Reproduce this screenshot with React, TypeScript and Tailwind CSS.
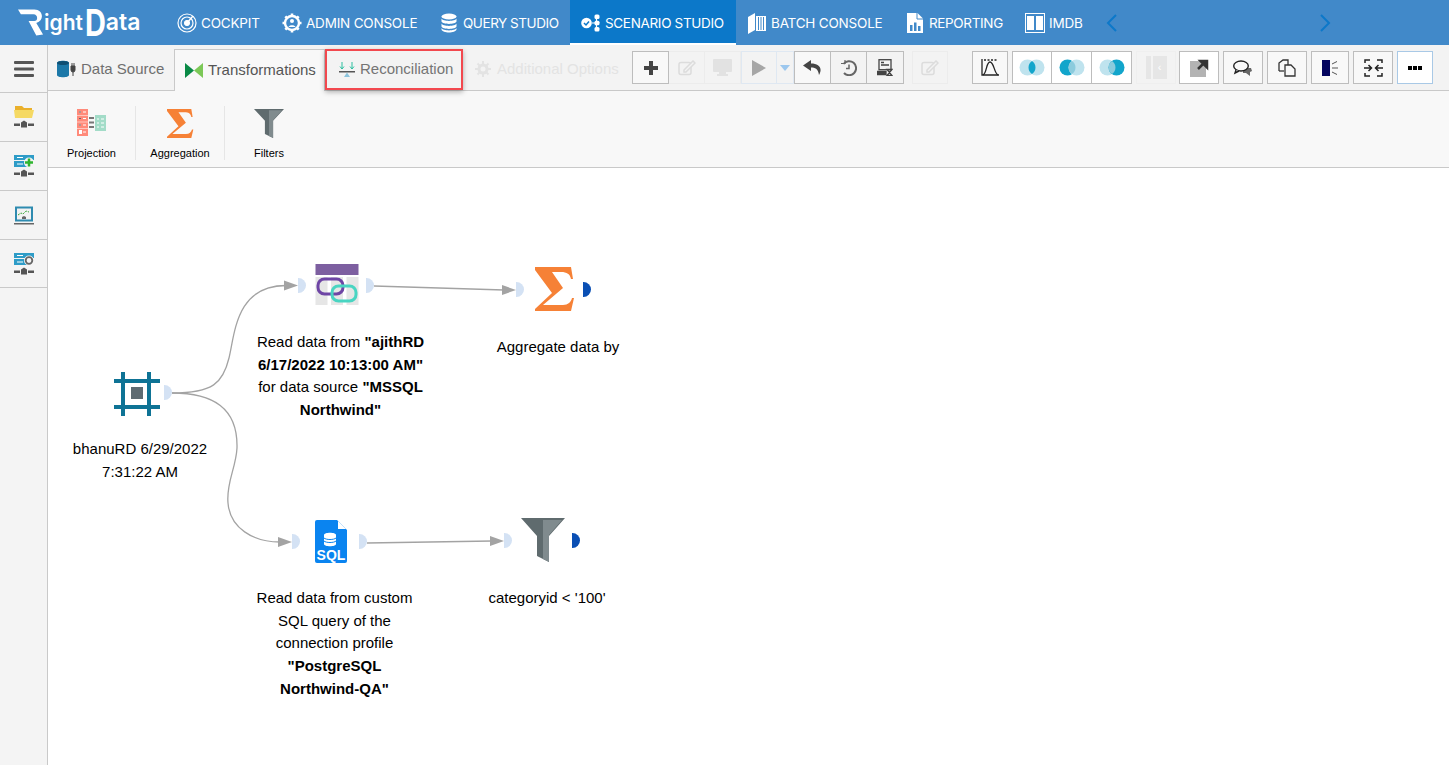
import type { ReactNode } from "react";

const NAV = [
  { label: "COCKPIT", w: 105, pl: "pl-[2px] gap-[4px]", tk: "tracking-[-0.2px]", icon: "cockpit" },
  { label: "ADMIN CONSOLE", w: 159, pl: "pl-[2px] gap-[4px]", tk: "tracking-[-0.2px]", icon: "admin" },
  { label: "QUERY STUDIO", w: 131, pl: "pl-[2px] gap-[6px]", tk: "tracking-[-0.45px]", icon: "query" },
  { label: "SCENARIO STUDIO", w: 166, pl: "pl-[11px] gap-[4px]", tk: "tracking-[-0.33px]", icon: "scenario", active: true },
  { label: "BATCH CONSOLE", w: 159, pl: "pl-[12px] gap-[5px]", tk: "tracking-[-0.2px]", icon: "batch" },
  { label: "REPORTING", w: 118, pl: "pl-[12px] gap-[6px]", tk: "tracking-[-0.35px]", icon: "report" },
  { label: "IMDB", w: 80, pl: "pl-[12px] gap-[4px]", tk: "tracking-[-0.2px]", icon: "imdb" },
];

function NavIcon({ name }: { name: string }) {
  if (name === "cockpit")
    return (
      <svg width="20" height="20" viewBox="0 0 20 20" fill="none" stroke="#fff">
        <circle cx="10" cy="10" r="9" strokeWidth="1.2" />
        <circle cx="10" cy="10" r="6" strokeWidth="1.2" />
        <circle cx="10" cy="10" r="2.6" fill="#fff" />
        <path d="M10 10 L16 3" strokeWidth="1.4" />
      </svg>
    );
  if (name === "admin")
    return (
      <svg width="20" height="20" viewBox="0 0 20 20" fill="none" stroke="#fff">
        <circle cx="10" cy="10" r="7" strokeWidth="2.4" />
        <path d="M10 0.5v3M10 16.5v3M0.5 10h3M16.5 10h3M3.3 3.3l2.1 2.1M14.6 14.6l2.1 2.1M3.3 16.7l2.1-2.1M14.6 5.4l2.1-2.1" strokeWidth="2.6" />
        <circle cx="10" cy="8" r="2" fill="#fff" stroke="none" />
        <path d="M6.5 14c.6-2.4 6.400-2.400 7 0z" fill="#fff" stroke="none" />
      </svg>
    );
  if (name === "query")
    return (
      <svg width="16" height="20" viewBox="0 0 16 20" fill="#fff">
        <ellipse cx="8" cy="3.500" rx="7.500" ry="3" />
        <path d="M.5 5.500c1 3.200 14 3.200 15 0v3c-1 3.200-14 3.200-15 0z" />
        <path d="M.5 10.500c1 3.200 14 3.200 15 0v3c-1 3.200-14 3.200-15 0z" />
        <path d="M.5 15c1 3.200 14 3.200 15 0v1.500c-1 4-14 4-15 0z" />
      </svg>
    );
  if (name === "scenario")
    return (
      <svg width="20" height="20" viewBox="0 0 20 20">
        <circle cx="5.500" cy="10" r="5.300" fill="#fff" />
        <path d="M3 10l2 2 3-3.500" fill="none" stroke="#0c78c9" strokeWidth="1.500" />
        <path d="M11 10h4M15.500 4v12" stroke="#fff" strokeWidth="1.200" />
        <rect x="13.500" y="1.500" width="5" height="4.500" rx="1.500" fill="#fff" />
        <rect x="13.500" y="7.800" width="5" height="4.500" rx="1.500" fill="#fff" />
        <rect x="13.500" y="14" width="5" height="4.500" rx="1.500" fill="#fff" />
      </svg>
    );
  if (name === "batch")
    return (
      <svg width="18" height="21" viewBox="0 0 18 21" fill="#fff">
        <path d="M0 4l7-4v17l-7 4z" />
        <path d="M8 3h10v15H8z" />
        <path d="M10.500 4v13M13 4v13M15.500 4v13" stroke="#4189c9" strokeWidth="1" />
      </svg>
    );
  if (name === "report")
    return (
      <svg width="16" height="20" viewBox="0 0 16 20">
        <path d="M0 0h10.500L16 5.500V20H0z" fill="#fff" />
        <path d="M10 0v6h6" fill="none" stroke="#4189c9" />
        <path d="M3 12h2.500v6H3zM7 9.500h2.500V18H7zM11 13h2.500v5H11z" fill="#4189c9" />
      </svg>
    );
  return (
    <span className="flex h-[20px] w-[20px] items-center justify-center gap-[2px] border border-white">
      <span className="h-[14px] w-[7px] bg-white" />
      <span className="h-[14px] w-[7px] bg-white" />
    </span>
  );
}

function Logo() {
  return (
    <div className="ml-[18px] flex w-[141px] items-center text-white [font-family:Inter,sans-serif]">
      <svg width="26" height="27" viewBox="0 0 27 27" fill="#fff">
        <path d="M0 0h17c9 0 11 11 2 14l7 12-7 1-8-15h6c4 0 4-7-1-7H3z" />
      </svg>
      <span className="text-[21px] leading-none font-semibold">ight</span>
      <span className="ml-[2px] inline-block scale-y-[1.25] text-[29px] leading-none font-bold">D</span>
      <span className="text-[23px] leading-none font-semibold">ata</span>
    </div>
  );
}

function TopBar() {
  return (
    <div className="flex h-[45px] shrink-0 items-center bg-[#4189c9]">
      <Logo />
      <div className="ml-[16px] flex h-full">
        {NAV.map((n) => (
          <div
            key={n.label}
            style={{ width: n.w }}
            className={`flex h-full items-center pt-[1px] text-white ${n.pl} ${n.active ? "bg-[#0c78c9] shadow-[inset_0_-2px_0_#fff]" : ""}`}
          >
            <NavIcon name={n.icon} />
            <span className={`text-[13.5px] whitespace-nowrap [font-family:Inter,sans-serif] ${n.tk}`}>{n.label}</span>
          </div>
        ))}
      </div>
      <svg width="14" height="20" viewBox="0 0 14 20" fill="none" stroke="#0c78c9" strokeWidth="2" className="ml-[12px]">
        <path d="M11 2L3 10l8 8" />
      </svg>
      <svg width="14" height="20" viewBox="0 0 14 20" fill="none" stroke="#0c78c9" strokeWidth="2" className="ml-[199px]">
        <path d="M3 2l8 8-8 8" />
      </svg>
    </div>
  );
}

function SideItem({ children, h }: { children: ReactNode; h: string }) {
  return <div className={`flex items-center justify-center border-b border-[#c9c9c9] ${h}`}>{children}</div>;
}

function NetBase({ y }: { y: number }) {
  return (
    <g fill="#555">
      <rect x="0" y={y + 3} width="6" height="2.500" />
      <rect x="14" y={y + 3} width="6" height="2.500" />
      <path d={`M7 ${y + 7}v-5l3-2 3 2v5z`} />
    </g>
  );
}

function Sidebar() {
  return (
    <div className="flex w-[48px] shrink-0 flex-col border-r border-[#c9c9c9] bg-[#f4f4f4]">
      <SideItem h="h-[48px]">
        <svg width="20" height="16" viewBox="0 0 20 16" fill="#555">
          <rect width="20" height="3" rx="1" />
          <rect y="6.500" width="20" height="3" rx="1" />
          <rect y="13" width="20" height="3" rx="1" />
        </svg>
      </SideItem>
      <SideItem h="h-[49px]">
        <svg width="20" height="22" viewBox="0 0 20 22">
          <path d="M1 0h7l2 2h8v6H1z" fill="#eab02b" />
          <path d="M1 12L0 4h20l-2 8z" fill="#f5d963" />
          <NetBase y={14.500} />
        </svg>
      </SideItem>
      <SideItem h="h-[49px]">
        <svg width="20" height="22" viewBox="0 0 20 22">
          <rect x="0" y="0" width="20" height="5" fill="#2e9cc7" />
          <rect x="0" y="6" width="14" height="6" fill="#2e9cc7" />
          <path d="M3 2.500h6M3 9h6" stroke="#fff" />
          <circle cx="15" cy="7.500" r="5" fill="#f4f4f4" />
          <path d="M15 3.500v8M11 7.500h8" stroke="#2fb52f" strokeWidth="2.500" />
          <NetBase y={14.500} />
        </svg>
      </SideItem>
      <SideItem h="h-[49px]">
        <svg width="20" height="19" viewBox="0 0 20 19">
          <rect x="1" y="0.500" width="18" height="15" fill="#2e8bb0" />
          <rect x="3" y="2.500" width="14" height="11" fill="#f2f2f2" />
          <path d="M4 9l3-2 2 1 3-3 3 1" fill="none" stroke="#35a535" strokeDasharray="2 1" />
          <path d="M8 13v-2l2-1 2 1v2z" fill="#666" />
          <rect y="17" width="20" height="1.500" fill="#666" />
        </svg>
      </SideItem>
      <SideItem h="h-[48px]">
        <svg width="20" height="22" viewBox="0 0 20 22">
          <rect x="0" y="0" width="20" height="5" fill="#2e9cc7" />
          <rect x="0" y="6" width="14" height="6" fill="#2e9cc7" />
          <path d="M3 2.500h6M3 9h6" stroke="#fff" />
          <circle cx="15" cy="7.500" r="5" fill="#f4f4f4" />
          <circle cx="15" cy="7.500" r="3.300" fill="none" stroke="#666" strokeWidth="1.800" />
          <NetBase y={14.500} />
        </svg>
      </SideItem>
    </div>
  );
}

function Btn({ children, w, cls = "border-[#bdbdbd] bg-white" }: { children?: ReactNode; w: number; cls?: string }) {
  return (
    <div style={{ width: w }} className={`flex h-[33px] items-center justify-center border ${cls}`}>
      {children}
    </div>
  );
}

function EditIcon() {
  return (
    <svg width="18" height="16" viewBox="0 0 18 16" fill="none" stroke="#dcdcdc" strokeWidth="1.500">
      <rect x="1" y="2.500" width="12" height="12" rx="2" />
      <path d="M6 10l9-9 2 2-9 9H6z" fill="#f3f3f3" />
    </svg>
  );
}

function Venn({ mode }: { mode: number }) {
  const light = "#bfe3ee";
  const dark = "#12a5cb";
  return (
    <svg width="26" height="17" viewBox="0 0 26 17">
      <circle cx="8.500" cy="8.500" r="8" fill={mode === 1 ? dark : light} />
      <circle cx="17.500" cy="8.500" r="8" fill={mode === 2 ? dark : light} />
      <path d="M13 1.900a8 8 0 0 1 0 13.200a8 8 0 0 1 0-13.200z" fill={mode === 0 ? dark : "#8bcbdd"} />
    </svg>
  );
}

function Toolbar() {
  return (
    <div className="flex items-center">
      <Btn w={37} cls="border-[#bdbdbd] bg-[#f8f8f8]">
        <svg width="14" height="14" viewBox="0 0 14 14" fill="#444">
          <path d="M5 0h4v5h5v4H9v5H5V9H0V5h5z" />
        </svg>
      </Btn>
      <Btn w={36} cls="border-[#ececec] border-l-0 bg-[#f3f3f3]"><EditIcon /></Btn>
      <Btn w={36} cls="border-[#ececec] border-l-0 bg-[#f3f3f3]">
        <svg width="19" height="17" viewBox="0 0 19 17" fill="#e2e2e2">
          <rect width="19" height="13" rx="1" />
          <rect x="6" y="13" width="7" height="2" />
          <rect x="4" y="15" width="11" height="2" />
        </svg>
      </Btn>
      <Btn w={36} cls="border-[#dfe8f2] bg-[#f3f3f3]">
        <svg width="14" height="16" viewBox="0 0 14 16" fill="#a6a6a6">
          <path d="M0 0l14 8-14 8z" />
        </svg>
      </Btn>
      <Btn w={17} cls="border-[#dfe8f2] border-l-0 bg-[#f3f3f3]">
        <svg width="10" height="6" viewBox="0 0 10 6" fill="#9cc7ee">
          <path d="M0 0h10L5 6z" />
        </svg>
      </Btn>
      <Btn w={37} cls="border-[#bdbdbd] bg-[#f8f8f8]">
        <svg width="19" height="15" viewBox="0 0 19 15" fill="#444">
          <path d="M8 0L0 5.500 8 11V7.500c4 0 7 1 8 7.500 4-7 0-11.500-8-11.500z" />
        </svg>
      </Btn>
      <Btn w={36} cls="border-[#bdbdbd] border-l-0 bg-[#f3f3f3]">
        <svg width="16" height="16" viewBox="0 0 16 16" fill="none" stroke="#666" strokeWidth="2">
          <path d="M2.500 4A7 7 0 1 1 3 13" />
          <path d="M8 4.500V8.500H5" strokeWidth="1.500" />
          <path d="M0 3.500h4V0" strokeWidth="1.200" />
        </svg>
      </Btn>
      <Btn w={37} cls="border-[#bdbdbd] border-l-0 bg-[#f3f3f3]">
        <svg width="16" height="17" viewBox="0 0 16 17" fill="none" stroke="#444" strokeWidth="1.300">
          <rect x="2" y="0.700" width="12" height="10" />
          <path d="M4 3.500h3M4 6h8" />
          <path d="M0 12.500h9v3H0z" fill="#444" />
          <path d="M10 10.500h5l-5 6h5z" />
        </svg>
      </Btn>
      <Btn w={36} cls="ml-[8px] border-[#ececec] bg-[#f3f3f3]"><EditIcon /></Btn>
    </div>
  );
}

function RightTools() {
  return (
    <div className="ml-[24px] flex items-center">
      <Btn w={36} cls="border-[#bdbdbd] bg-[#f8f8f8]">
        <svg width="18" height="17" viewBox="0 0 18 17" fill="none" stroke="#222" strokeWidth="1.300">
          <path d="M1 0v16h17" />
          <path d="M2 16C6 14 5 3 9 3s4 11 8 13" />
          <path d="M3 1h13" strokeDasharray="2 1.500" />
        </svg>
      </Btn>
      <div className="ml-[4px] flex">
        <Btn w={40} cls="border-[#bdbdbd] bg-white"><Venn mode={0} /></Btn>
        <Btn w={40} cls="border-[#bdbdbd] border-l-0 bg-white"><Venn mode={1} /></Btn>
        <Btn w={40} cls="border-[#bdbdbd] border-l-0 bg-white"><Venn mode={2} /></Btn>
      </div>
      <Btn w={40} cls="ml-[4px] border-[#efefef] bg-[#f3f3f3]">
        <span className="flex items-center gap-[2px]">
          <span className="h-[23px] w-[5px] bg-[#e6e6e6]" />
          <span className="flex h-[23px] w-[14px] items-center justify-center bg-[#e6e6e6] text-[11px] leading-none text-white [font-family:'Liberation_Sans',sans-serif]">‹</span>
        </span>
      </Btn>
      <Btn w={40} cls="ml-[3px] border-[#bdbdbd] bg-white">
        <svg width="19" height="19" viewBox="0 0 19 19">
          <rect y="3" width="16" height="16" fill="#b3b3b3" />
          <path d="M8 11l6-6M10.500 3H17v6.500z" stroke="#333" strokeWidth="2.500" fill="#333" />
        </svg>
      </Btn>
      <Btn w={40} cls="ml-[4px] border-[#bdbdbd] bg-[#f8f8f8]">
        <svg width="20" height="16" viewBox="0 0 20 16" fill="none" strokeWidth="1.400">
          <path d="M10 8h8l1 3-2 1v4l-4-3h-3z" fill="#666" />
          <ellipse cx="8" cy="6" rx="7.300" ry="5" stroke="#222" fill="#f8f8f8" />
          <path d="M3 10l-1 3 4-2" stroke="#222" fill="#f8f8f8" />
        </svg>
      </Btn>
      <Btn w={40} cls="ml-[4px] border-[#bdbdbd] bg-[#f8f8f8]">
        <svg width="18" height="18" viewBox="0 0 18 18" fill="none" stroke="#333" strokeWidth="1.300">
          <path d="M1 12V4l4-3h5v5" />
          <path d="M1 12h5" />
          <path d="M7 6h6l4 4v7H7z" fill="#f8f8f8" />
        </svg>
      </Btn>
      <Btn w={38} cls="ml-[4px] border-[#bdbdbd] bg-[#f8f8f8]">
        <svg width="16" height="16" viewBox="0 0 16 16">
          <rect width="8" height="16" fill="#03045e" />
          <path d="M10 4l5-2.500M10 8h6M10 12l5 2.500" stroke="#555" />
        </svg>
      </Btn>
      <Btn w={40} cls="ml-[4px] border-[#bdbdbd] bg-[#f8f8f8]">
        <svg width="19" height="18" viewBox="0 0 19 18" fill="none" stroke="#222" strokeWidth="1.500">
          <path d="M1 4V1h5M13 1h5v3M1 14v3h5M13 17h5v-3" />
          <path d="M0 9h7M4.500 6L7.500 9l-3 3M19 9h-7M14.500 6l-3 3 3 3" />
        </svg>
      </Btn>
      <Btn w={36} cls="ml-[4px] border-[#a9c9e6] bg-white">
        <span className="flex gap-[1px]">
          <span className="h-[4px] w-[4px] bg-black" />
          <span className="h-[4px] w-[4px] bg-black" />
          <span className="h-[4px] w-[4px] bg-black" />
        </span>
      </Btn>
    </div>
  );
}

function Tabs() {
  return (
    <div className="flex h-[46px] shrink-0 items-end border-b border-[#c9c9c9] bg-[#f3f3f3]">
      <div className="relative z-10 flex h-full w-[126px] items-center pt-[3px] pl-[9px] text-[15px] text-[#6f6f6f]">
        <svg width="20" height="18" viewBox="0 0 20 18" className="mr-[4px]">
          <path d="M0 3c0-3 12-3 12 0v12c0 3-12 3-12 0z" fill="#1c78a8" />
          <ellipse cx="6" cy="3" rx="6" ry="2" fill="#0f4f73" />
          <path d="M14 6v4a2 2 0 0 0 4 0V6zM15 3v3M17 3v3M16 12v4" stroke="#444" fill="#444" />
        </svg>
        Data Source
      </div>
      <div className="relative z-10 -mb-[1px] flex h-[42px] w-[151px] items-center border-x border-t border-[#c9c9c9] bg-[#f8f8f8] pl-[10px] text-[15px] text-[#555]">
        <svg width="18" height="15" viewBox="0 0 18 15" className="mr-[5px]">
          <path d="M0 0l9 7.500L0 15z" fill="#0a8a46" />
          <path d="M18 0L9 7.500 18 15z" fill="#7cc857" />
        </svg>
        Transformations
      </div>
      <div className="relative z-20 flex h-[41px] w-[138px] items-center border-2 border-[#f2484e] pl-[11px] text-[15px] text-[#757575] shadow-[0_2px_5px_rgba(0,0,0,0.3)]">
        <svg width="18" height="16" viewBox="0 0 18 16" className="mr-[4px]">
          <path d="M4 0v7M14 0v7M2 4.500L4 7l2-2.500M12 4.500L14 7l2-2.500" fill="none" stroke="#2cbfa0" />
          <rect x="1" y="9" width="16" height="1.500" fill="#555" />
          <path d="M9 10.500l3 4.500H6z" fill="#8cc4dc" />
        </svg>
        Reconciliation
      </div>
      <div className="flex h-full w-[169px] items-center pt-[3px] pl-[12px] text-[15px] text-[#e3e3e3]">
        <svg width="16" height="16" viewBox="0 0 16 16" className="mr-[6px]" fill="none" stroke="#e3e3e3" strokeWidth="3">
          <circle cx="8" cy="8" r="4" />
          <path d="M8 0v3M8 13v3M0 8h3M13 8h3M2.500 2.500l2 2M11.500 11.500l2 2M2.500 13.500l2-2M11.500 4.500l2-2" strokeWidth="2" />
        </svg>
        Additional Options
      </div>
      <div className="flex h-full items-center">
        <Toolbar />
        <RightTools />
      </div>
    </div>
  );
}

function RibbonItem({ label, w, children, sep = true }: { label: string; w: number; children: ReactNode; sep?: boolean }) {
  return (
    <div style={{ width: w }} className={`flex h-[54px] flex-col items-center justify-between pt-[2px] ${sep ? "border-r border-[#e6e6e6]" : ""}`}>
      <div className="flex h-[30px] items-center">{children}</div>
      <span className="text-[11px] leading-[13px] text-black [font-family:'Liberation_Sans',sans-serif]">{label}</span>
    </div>
  );
}

function ProjectionIcon() {
  return (
    <svg width="30" height="28" viewBox="0 0 30 28">
      <rect x="0" y="0" width="11" height="27" fill="#ff8a7a" />
      <path d="M0 6.500h11M0 13h11M0 19.500h11" stroke="#fff" strokeOpacity="0.5" />
      <path d="M2 3h2M6 3h3M2 9.500h2M6 9.500h3M2 16h2M6 16h3M6 23h3" stroke="#fff" />
      <path d="M2 3h2M2 9.500h2M2 16h2" stroke="#666" />
      <rect x="2" y="21" width="3" height="4" fill="#fff" />
      <rect x="18" y="6" width="11" height="16" fill="#a3dcc8" />
      <path d="M20 10h2M24 10h3M20 14h2M24 14h3M20 18h2M24 18h3" stroke="#fff" />
      <path d="M12 9h5M12 13.500h5M12 18h5" stroke="#777" strokeWidth="1.800" />
    </svg>
  );
}

function SigmaIcon({ w, h }: { w: number; h: number }) {
  return (
    <svg width={w} height={h} viewBox="0 0 40 44" preserveAspectRatio="none">
      <path d="M0 0H36L38 12H36C35 7 32 5 26 5H17L28 21L8 38H28C33 38 36 35 37 31H39L36 44H0V42L17 26L0 3Z" fill="#f68136" />
    </svg>
  );
}

function FunnelIcon({ w, h }: { w: number; h: number }) {
  return (
    <svg width={w} height={h} viewBox="0 0 44 44" preserveAspectRatio="none">
      <path d="M0 0H44L28 18V44L16 38V18Z" fill="#5f6b6e" />
      <path d="M22 2H41L28 17V44L22 41Z" fill="#808b8e" />
    </svg>
  );
}

function Ribbon() {
  return (
    <div className="flex h-[77px] shrink-0 items-start border-b border-[#c9c9c9] bg-[#f8f8f8] pt-[15px]">
      <div className="flex">
        <RibbonItem label="Projection" w={88}><ProjectionIcon /></RibbonItem>
        <RibbonItem label="Aggregation" w={89}><SigmaIcon w={27} h={29} /></RibbonItem>
        <RibbonItem label="Filters" w={88} sep={false}><FunnelIcon w={30} h={29} /></RibbonItem>
      </div>
    </div>
  );
}

function Port({ x, y, out }: { x: number; y: number; out?: boolean }) {
  return (
    <div
      style={{ left: x, top: y }}
      className={`absolute h-[15px] w-[8px] rounded-r-full ${out ? "bg-[#0a4fb4]" : "bg-[#d4e2f4]"}`}
    />
  );
}

function Label({ x, y, w, children }: { x: number; y: number; w: number; children: ReactNode }) {
  return (
    <div
      style={{ left: x, top: y, width: w }}
      className="absolute text-center text-[15px] leading-[22.700px] text-black [font-family:'Liberation_Sans',sans-serif]"
    >
      {children}
    </div>
  );
}

function Canvas() {
  return (
    <div className="relative flex-1 bg-white">
      {/* coordinates are relative to the canvas, origin at 48,168 */}
      <svg width="1401" height="597" className="absolute top-0 left-0" fill="none" stroke="#a3a3a3" strokeWidth="1.300">
        <path d="M124 225 C165 225 175 215 181 190 C187 165 188 117.500 238 117.500" />
        <path d="M124 225 C165 225 190 240 189 280 C188 300 178 315 180 335 C182 360 205 374 232 374" />
        <path d="M326 118 L456 122" />
        <path d="M319 375 L444 373" />
        <g fill="#a3a3a3" stroke="none">
          <path d="M236 112.500l14 5-14 5z" />
          <path d="M230 369l14 5-14 5z" />
          <path d="M454 117l14 5-14 5z" />
          <path d="M442 368l14 5-14 5z" />
        </g>
      </svg>

      {/* root node */}
      <svg width="46" height="44" viewBox="0 0 46 44" className="absolute top-[204px] left-[66px]">
        <path d="M9 0v44M35 0v44M0 9h46M0 35h46" stroke="#0e7395" strokeWidth="4" />
        <rect x="17" y="15" width="12" height="12" fill="#5e6b72" />
      </svg>
      <Port x={116} y={217} />
      <Label x={17} y={270} w={150}>bhanuRD 6/29/2022 7:31:22 AM</Label>

      {/* join node */}
      <Port x={250} y={110} />
      <svg width="44" height="42" viewBox="0 0 44 42" className="absolute top-[95px] left-[267px]">
        <rect width="44" height="42" fill="#fff" />
        <rect x="0.500" y="14" width="12" height="28" fill="#e6e6e6" />
        <rect x="16" y="14" width="12" height="28" fill="#e6e6e6" />
        <rect x="31.500" y="14" width="12" height="28" fill="#e6e6e6" />
        <rect x="0.500" y="1" width="43" height="11" fill="#7d5fa0" />
        <rect x="3" y="16" width="25" height="15" rx="6.500" fill="none" stroke="#6e45a5" strokeWidth="3" />
        <rect x="17" y="23" width="24" height="15" rx="6.500" fill="none" stroke="#49d5c2" strokeWidth="3" />
      </svg>
      <Port x={318} y={110} />
      <Label x={200} y={163} w={185}>
        Read data from <b>"ajithRD 6/17/2022 10:13:00 AM"</b> for data source <b>"MSSQL Northwind"</b>
      </Label>

      {/* aggregation */}
      <Port x={468} y={114} />
      <div className="absolute top-[99px] left-[487px]"><SigmaIcon w={40} h={44} /></div>
      <Port x={535} y={114} out />
      <Label x={440} y={168} w={140}>Aggregate data by</Label>

      {/* sql */}
      <Port x={244} y={366} />
      <svg width="32" height="43" viewBox="0 0 32 43" className="absolute top-[352px] left-[267px]">
        <path d="M0 2a2 2 0 0 1 2-2h20l10 10v31a2 2 0 0 1-2 2H2a2 2 0 0 1-2-2z" fill="#0a84f0" />
        <path d="M23 1l8 8h-8z" fill="#fff" />
        <path d="M9 15c0-3 12-3 12 0v9c0 3-12 3-12 0z" fill="#fff" />
        <path d="M9 18c2 2 10 2 12 0M9 21c2 2 10 2 12 0" stroke="#0a84f0" fill="none" />
        <text x="16" y="40" fontSize="14" fontWeight="700" textAnchor="middle" fill="#fff" fontFamily="'Liberation Sans', sans-serif">SQL</text>
      </svg>
      <Port x={311} y={366} />
      <Label x={204} y={419} w={165}>
        Read data from custom SQL query of the connection profile <b>"PostgreSQL <span className="whitespace-nowrap">Northwind-QA"</span></b>
      </Label>

      {/* filter */}
      <Port x={456} y={365} />
      <div className="absolute top-[350px] left-[473px]"><FunnelIcon w={44} h={44} /></div>
      <Port x={524} y={365} out />
      <Label x={429} y={419} w={140}>categoryid &lt; '100'</Label>
    </div>
  );
}

export default function App() {
  return (
    <div className="flex h-[765px] w-[1449px] flex-col overflow-hidden bg-white [font-family:'Liberation_Sans',sans-serif]">
      <TopBar />
      <div className="flex min-h-0 flex-1">
        <Sidebar />
        <div className="flex min-w-0 flex-1 flex-col">
          <Tabs />
          <Ribbon />
          <Canvas />
        </div>
      </div>
    </div>
  );
}
